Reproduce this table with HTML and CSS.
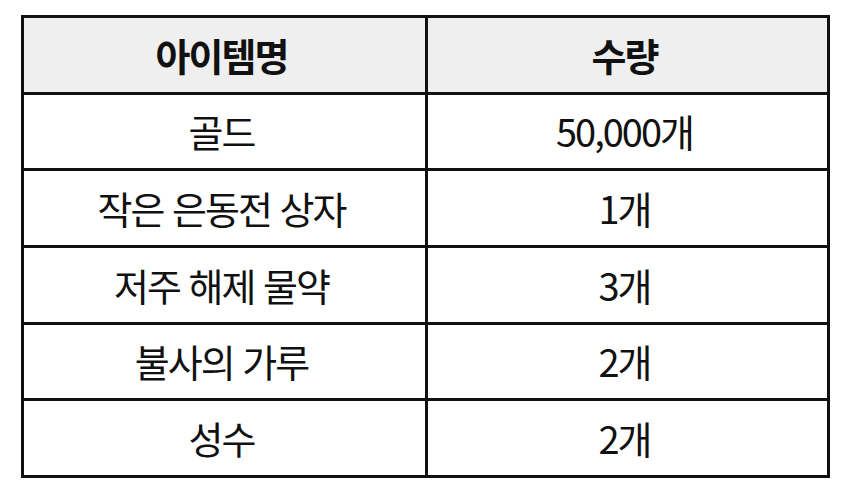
FILE: index.html
```html
<!DOCTYPE html>
<html lang="ko">
<head>
<meta charset="utf-8">
<link rel="stylesheet" href="styles.css">
</head>
<body>
<table class="items">
  <colgroup>
    <col class="col-name">
    <col class="col-qty">
  </colgroup>
  <thead>
    <tr><th>아이템명</th><th>수량</th></tr>
  </thead>
  <tbody>
    <tr><td>골드</td><td>50,000개</td></tr>
    <tr><td>작은 은동전 상자</td><td>1개</td></tr>
    <tr><td>저주 해제 물약</td><td>3개</td></tr>
    <tr><td>불사의 가루</td><td>2개</td></tr>
    <tr><td>성수</td><td>2개</td></tr>
  </tbody>
</table>
</body>
</html>
```
FILE: styles.css
```css
html, body {
  margin: 0;
  padding: 0;
  background: #ffffff;
}
body {
  padding: 15px 0 0 21px;
  font-family: "Noto Sans CJK KR", "Noto Sans", sans-serif;
  color: #111111;
}
.items {
  border-collapse: collapse;
  width: 809px;
  table-layout: fixed;
}
.col-name {
  width: 404px;
}
.items th, .items td {
  border: 3px solid #111111;
  height: 73.67px;
  padding: 0 6px 0 0;
  text-align: center;
  vertical-align: middle;
  font-size: 38px;
  letter-spacing: -2px;
  line-height: 1;
}
.items th {
  background: #efefef;
  font-weight: 700;
}
.items td {
  font-weight: 400;
}
```
